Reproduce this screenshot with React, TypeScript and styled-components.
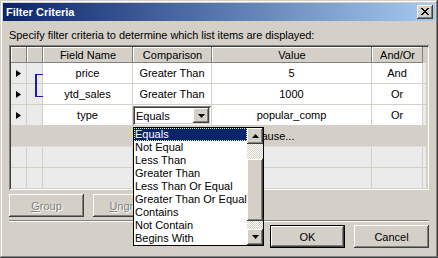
import styled, { createGlobalStyle } from "styled-components"

const GlobalStyle = createGlobalStyle`
  html, body { margin: 0; padding: 0; background: #d4d0c8; }
  body { font-family: "Liberation Sans", Arial, sans-serif; font-size: 11px; color: #000; }
  * { box-sizing: border-box; }
`

const raised = `
  box-shadow: inset -1px -1px #404040, inset 1px 1px #ffffff,
    inset -2px -2px #808080, inset 2px 2px #d4d0c8;
`
const sunken = `
  box-shadow: inset 1px 1px #808080, inset -1px -1px #ffffff,
    inset 2px 2px #404040, inset -2px -2px #d4d0c8;
`

const COLS = "16px 16px 90px 79px 160px 51px 4px"

const Window = styled.div`
  position: relative;
  width: 438px;
  height: 258px;
  padding: 3px;
  background: #d4d0c8;
  box-shadow: inset -1px -1px #404040, inset 1px 1px #d4d0c8,
    inset -2px -2px #808080, inset 2px 2px #ffffff;
  display: flex;
  flex-direction: column;
`

const TitleBar = styled.div`
  height: 18px;
  display: flex;
  align-items: center;
  justify-content: space-between;
  padding: 0 2px 0 3px;
  background: linear-gradient(90deg, #0a246a 0%, #a6caf0 100%);
  color: #fff;
  font-weight: bold;
  font-size: 11px;
`

const CloseButton = styled.div`
  width: 16px;
  height: 14px;
  background: #d4d0c8;
  ${raised}
  display: flex;
  align-items: center;
  justify-content: center;
  padding: 0 1px 1px 0;
`

const Body = styled.div`
  padding: 8px 6px 0 6px;
  display: flex;
  flex-direction: column;
`

const Label = styled.div`
  height: 13px;
  line-height: 13px;
  white-space: nowrap;
  letter-spacing: -0.05px;
`

const Grid = styled.div`
  position: relative;
  margin-top: 3px;
  height: 145px;
  padding: 2px;
  background: #ebebeb;
  ${sunken}
  overflow: hidden;
`

const Row = styled.div<{ $h: number; $bg: string }>`
  display: grid;
  grid-template-columns: ${COLS};
  height: ${(p) => p.$h}px;
  background: ${(p) => p.$bg};
`

const HeadCell = styled.div`
  display: flex;
  align-items: center;
  justify-content: center;
  background: #d4d0c8;
  box-shadow: inset -1px -1px #808080, inset 1px 1px #ffffff;
  white-space: nowrap;
  overflow: hidden;
`

const Cell = styled.div<{ $bg?: string }>`
  display: flex;
  align-items: center;
  justify-content: center;
  background: ${(p) => p.$bg || "#ffffff"};
  border-right: 1px solid #d4d0c8;
  border-bottom: 1px solid #d4d0c8;
  white-space: nowrap;
  overflow: hidden;
`

const AddRow = styled.div`
  height: 21px;
  display: flex;
  align-items: center;
  justify-content: center;
  padding-right: 8px;
  background: #d4d0c8;
  border-bottom: 1px solid #e0ddd6;
`

const Bracket = styled.div`
  position: absolute;
  left: 26px;
  top: 29px;
  width: 8px;
  height: 23px;
  border: 1px solid #1c1ca8;
  border-left-width: 2px;
  border-right: none;
`

const Combo = styled.div`
  width: 100%;
  height: 19px;
  margin-top: 1px;
  background: #fff;
  ${sunken}
  padding: 2px;
  display: flex;
  align-items: center;
  justify-content: space-between;
`

const ComboText = styled.span`
  padding-left: 1px;
`

const ArrowButton = styled.div<{ $h?: number }>`
  width: 16px;
  height: ${(p) => p.$h || 16}px;
  flex: none;
  background: #d4d0c8;
  ${raised}
  display: flex;
  align-items: center;
  justify-content: center;
`

const ButtonRow = styled.div<{ $end?: boolean }>`
  display: flex;
  gap: 9px;
  justify-content: ${(p) => (p.$end ? "flex-end" : "flex-start")};
  margin-top: ${(p) => (p.$end ? 3 : 4)}px;
`

const Button = styled.div<{ $disabled?: boolean; $default?: boolean }>`
  width: 75px;
  height: 23px;
  display: flex;
  align-items: center;
  justify-content: center;
  background: #d4d0c8;
  color: ${(p) => (p.$disabled ? "#808080" : "#000")};
  text-shadow: ${(p) => (p.$disabled ? "1px 1px #ffffff" : "none")};
  ${(p) =>
    p.$default
      ? `box-shadow: inset 0 0 0 1px #000, inset -2px -2px #404040, inset 2px 2px #ffffff, inset -3px -3px #808080;`
      : raised}
`

const Separator = styled.div`
  margin-top: 3px;
  height: 2px;
  border-top: 1px solid #808080;
  border-bottom: 1px solid #ffffff;
`

const DropList = styled.div`
  position: absolute;
  left: 133px;
  top: 127px;
  width: 131px;
  height: 119px;
  background: #fff;
  border: 1px solid #000;
  display: flex;
`

const Items = styled.div`
  flex: 1;
  min-width: 0;
  overflow: hidden;
`

const Item = styled.div<{ $sel?: boolean }>`
  height: 13px;
  line-height: 12px;
  padding-left: 1px;
  white-space: nowrap;
  overflow: hidden;
  background: ${(p) => (p.$sel ? "#0a246a" : "transparent")};
  color: ${(p) => (p.$sel ? "#fff" : "#000")};
  outline: ${(p) => (p.$sel ? "1px dotted #e8e8a0" : "none")};
  outline-offset: -1px;
`

const ScrollBar = styled.div`
  width: 16px;
  flex: none;
  display: flex;
  flex-direction: column;
`

const Track = styled.div<{ $h: number }>`
  height: ${(p) => p.$h}px;
  background-color: #fff;
  background-image: repeating-conic-gradient(#d4d0c8 0 25%, #ffffff 0 50%);
  background-size: 2px 2px;
`

const Thumb = styled.div`
  flex: 1;
  background: #d4d0c8;
  ${raised}
`

function Tri({ dir }: { dir: "up" | "down" | "right" }) {
  const pts =
    dir === "down"
      ? "0,0 7,0 3.5,4"
      : dir === "up"
      ? "3.5,0 7,4 0,4"
      : "0,0 5,3.5 0,7"
  const w = dir === "right" ? 5 : 7
  const h = dir === "right" ? 7 : 4
  return (
    <svg width={w} height={h} viewBox={`0 0 ${w} ${h}`}>
      <polygon points={pts} fill="#000" />
    </svg>
  )
}

function CloseGlyph() {
  const rows = ["11000011", "01100110", "00111100", "00011000", "00111100", "01100110", "11000011"]
  return (
    <svg width={8} height={7} viewBox="0 0 8 7" shapeRendering="crispEdges">
      {rows.flatMap((r, y) =>
        r.split("").map((c, x) => (c === "1" ? <rect key={`${x}-${y}`} x={x} y={y} width={1} height={1} fill="#000" /> : null))
      )}
    </svg>
  )
}

const rows = [
  { field: "price", cmp: "Greater Than", value: "5", andor: "And" },
  { field: "ytd_sales", cmp: "Greater Than", value: "1000", andor: "Or" },
  { field: "type", cmp: "", value: "popular_comp", andor: "Or" },
]

const options = [
  "Equals",
  "Not Equal",
  "Less Than",
  "Greater Than",
  "Less Than Or Equal",
  "Greater Than Or Equal",
  "Contains",
  "Not Contain",
  "Begins With",
]

export default function App() {
  return (
    <>
      <GlobalStyle />
      <Window>
        <TitleBar>
          <span>Filter Criteria</span>
          <CloseButton>
            <CloseGlyph />
          </CloseButton>
        </TitleBar>
        <Body>
          <Label>Specify filter criteria to determine which list items are displayed:</Label>
          <Grid>
            <Row $h={16} $bg="#d4d0c8">
              <HeadCell />
              <HeadCell />
              <HeadCell>Field Name</HeadCell>
              <HeadCell>Comparison</HeadCell>
              <HeadCell>Value</HeadCell>
              <HeadCell>And/Or</HeadCell>
              <span />
            </Row>
            {rows.map((r) => (
              <Row key={r.field} $h={21} $bg="#ebebeb">
                <Cell $bg="#ebebeb">
                  <Tri dir="right" />
                </Cell>
                <Cell $bg="#ebebeb" />
                <Cell>{r.field}</Cell>
                {r.cmp ? (
                  <Cell>{r.cmp}</Cell>
                ) : (
                  <Cell>
                    <Combo>
                      <ComboText>Equals</ComboText>
                      <ArrowButton $h={15}>
                        <Tri dir="down" />
                      </ArrowButton>
                    </Combo>
                  </Cell>
                )}
                <Cell>{r.value}</Cell>
                <Cell>{r.andor}</Cell>
                <Cell $bg="#ebebeb" />
              </Row>
            ))}
            <AddRow>Click here to add a new clause...</AddRow>
            {[0, 1].map((i) => (
              <Row key={i} $h={21} $bg="#ebebeb">
                <Cell $bg="#ebebeb" />
                <Cell $bg="#ebebeb" />
                <Cell $bg="#ebebeb" />
                <Cell $bg="#ebebeb" />
                <Cell $bg="#ebebeb" />
                <Cell $bg="#ebebeb" />
                <Cell $bg="#ebebeb" />
              </Row>
            ))}
            <Bracket />
          </Grid>
          <ButtonRow>
            <Button $disabled>
              <span>
                <u>G</u>roup
              </span>
            </Button>
            <Button $disabled>
              <span>
                <u>U</u>ngroup
              </span>
            </Button>
          </ButtonRow>
          <Separator />
          <ButtonRow $end>
            <Button $default>OK</Button>
            <Button>Cancel</Button>
          </ButtonRow>
        </Body>
        <DropList>
          <Items>
            {options.map((o, i) => (
              <Item key={o} $sel={i === 0}>
                {o}
              </Item>
            ))}
          </Items>
          <ScrollBar>
            <ArrowButton>
              <Tri dir="up" />
            </ArrowButton>
            <Track $h={15} />
            <Thumb />
            <Track $h={8} />
            <ArrowButton>
              <Tri dir="down" />
            </ArrowButton>
          </ScrollBar>
        </DropList>
      </Window>
    </>
  )
}
